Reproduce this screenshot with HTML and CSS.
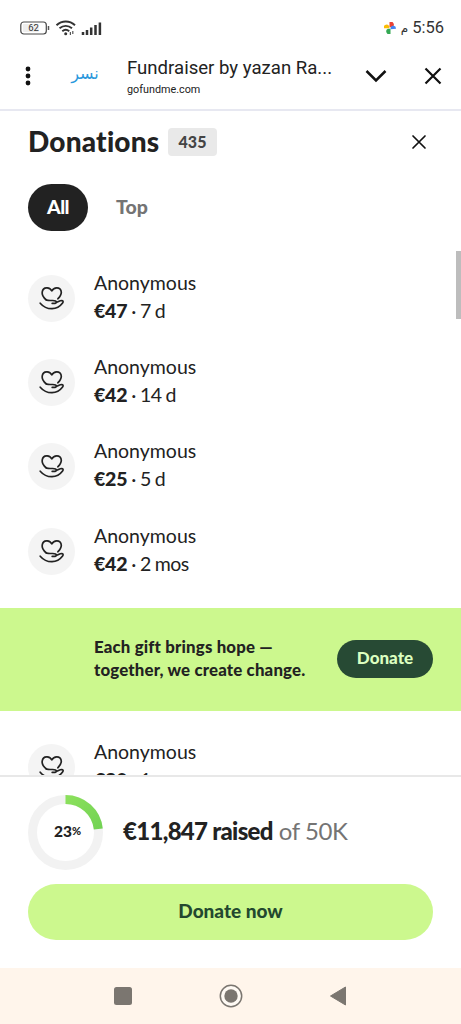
FILE: index.html
```html
<!DOCTYPE html>
<html lang="en">
<head>
<meta charset="utf-8">
<meta name="viewport" content="width=device-width">
<title>Donations</title>
<link rel="stylesheet" href="styles.css">
</head>
<body>
<svg class="defs" width="0" height="0" aria-hidden="true">
  <symbol id="gift" viewBox="0 0 47 47">
    <g fill="none" stroke="#222" stroke-width="1.7" stroke-linecap="round" stroke-linejoin="round">
      <path d="M18.4 25C15.500 22.700 13.800 20 14.200 17.100C14.600 14.300 16.700 12.600 19.200 12.800C21.200 13 22.800 14 23.800 15.900C24.900 14 26.600 12.900 28.700 12.800C31.200 12.700 33.200 14.500 33.300 17.200C33.400 20 31.800 21.700 29.900 23.800"/>
      <path d="M18.400 25C20.700 25.800 22.300 25.400 24.600 25.500C27 25.600 28.500 26.100 28.400 27.200C28.300 28.500 26.300 28.600 24.200 28.300M28.400 27.500C30.300 26.900 31.800 25.600 33.600 25.500C35.200 25.500 35.500 26.900 34.600 28C32.500 30.800 28.800 33.600 24 33.700C18.800 33.800 15 31.400 12.200 28.200"/>
    </g>
  </symbol>
</svg>
<div class="screen">
  <div class="status">
    <svg width="84" height="18" viewBox="0 0 84 18">
      <rect x=".8" y="3" width="25.5" height="12" rx="3" fill="#fff" stroke="#484848" stroke-width="1.2"/>
      <rect x="2.8" y="5" width="16" height="8" rx="1" fill="#eee"/>
      <path d="M28.5 7v4" stroke="#555" stroke-width="1.5"/>
      <text x="13.500" y="12.2" text-anchor="middle" class="battery">62</text>
      <g fill="none" stroke="#333" stroke-width="2">
        <path d="M36.5 6.2C41.9 1.4 49.6 1.4 55 6.2"/>
        <path d="M39.5 9.3C43.3 6.2 48.2 6.2 52 9.3"/>
        <path d="M42.3 12.2C44.3 10.5 47.2 10.5 49.2 12.2"/>
      </g>
      <circle cx="45.7" cy="14.7" r="1.5" fill="#333"/>
      <path d="M50.4 16v-3M52.8 12v3" stroke="#555" stroke-width="1.2"/>
      <path d="M63 16v-3M67 16v-5M71.2 16v-7.5M75.5 16v-10M79.9 16v-12.5" stroke="#333" stroke-width="2.500"/>
    </svg>
    <div class="clock">
      <svg width="12" height="12" viewBox="0 0 12 12">
        <path d="M5.500 0A2.900 2.900 0 0 1 8.200 5.200H5.500z" fill="#ea4335"/>
        <path d="M6.600 5.800A2.700 2.700 0 0 1 11.900 6.800L6.600 7.300z" fill="#4285f4"/>
        <path d="M6.500 6.800V12A2.800 2.800 0 0 1 3.900 6.800z" fill="#34a853"/>
        <path d="M5.300 6.300H0A2.700 2.700 0 0 1 5.300 4.500z" fill="#fbbc04"/>
      </svg>
      <span class="meridiem">م</span><span>5:56</span>
    </div>
  </div>
  <div class="browser">
    <svg class="dots" width="6" height="20" viewBox="0 0 6 20"><g fill="#111"><circle cx="3" cy="3" r="2.4"/><circle cx="3" cy="10" r="2.4"/><circle cx="3" cy="17" r="2.4"/></g></svg>
    <span class="site-logo">نسر</span>
    <div class="page-name"><div class="page-title">Fundraiser by yazan Ra...</div><div class="page-host">gofundme.com</div></div>
    <svg class="chevron" width="22" height="14" viewBox="0 0 22 14"><path d="M1.5 2L11 11.400L20.500 2" fill="none" stroke="#111" stroke-width="2.500"/></svg>
    <svg class="close" width="18" height="18" viewBox="0 0 18 18"><path d="M1.500 1.500l15 15M16.500 1.500l-15 15" stroke="#111" stroke-width="2.200"/></svg>
  </div>
  <main class="dialog">
    <header class="heading">
      <h1>Donations</h1><span class="count">435</span>
      <svg width="16" height="16" viewBox="0 0 16 16"><path d="M2 2l12 12M14 2L2 14" stroke="#111" stroke-width="1.700" stroke-linecap="round"/></svg>
    </header>
    <nav class="tabs"><span class="tab active">All</span><span class="tab">Top</span></nav>
    <section class="list">
      <div class="donor"><span class="avatar"><svg><use href="#gift"/></svg></span><div class="info"><div class="name">Anonymous</div><div class="amount"><b>€47</b> · 7 d</div></div></div>
      <div class="donor"><span class="avatar"><svg><use href="#gift"/></svg></span><div class="info"><div class="name">Anonymous</div><div class="amount"><b>€42</b> · 14 d</div></div></div>
      <div class="donor"><span class="avatar"><svg><use href="#gift"/></svg></span><div class="info"><div class="name">Anonymous</div><div class="amount"><b>€25</b> · 5 d</div></div></div>
      <div class="donor"><span class="avatar"><svg><use href="#gift"/></svg></span><div class="info"><div class="name">Anonymous</div><div class="amount"><b>€42</b> · 2 mos</div></div></div>
      <div class="banner"><p>Each gift brings hope —<br>together, we create change.</p><span class="donate">Donate</span></div>
      <div class="donor"><span class="avatar"><svg><use href="#gift"/></svg></span><div class="info"><div class="name">Anonymous</div><div class="amount"><b>€20</b> · 1 mo</div></div></div>
      <div class="scrollbar"></div>
    </section>
    <footer class="summary">
      <div class="progress">
        <div class="ring">
          <svg width="75" height="75" viewBox="0 0 75 75">
            <defs><linearGradient id="arc" x1="0" y1="0" x2="1" y2="1"><stop offset="0" stop-color="#8be05c"/><stop offset="1" stop-color="#73d354"/></linearGradient></defs>
            <circle cx="37.500" cy="37.500" r="33" fill="none" stroke="#f2f2f2" stroke-width="9"/>
            <path d="M37.500 4.500A33 33 0 0 1 70.300 34" fill="none" stroke="url(#arc)" stroke-width="9"/>
          </svg>
          <span class="percent">23<small>%</small></span>
        </div>
        <div class="raised"><b>€11,847 raised</b><span>of 50K</span></div>
      </div>
      <div class="donate-now">Donate now</div>
    </footer>
  </main>
  <div class="system-nav">
    <svg width="18" height="18"><rect width="18" height="18" rx="2.500" fill="#7b7670"/></svg>
    <svg width="24" height="24"><circle cx="12" cy="12" r="10.700" fill="#fffaf4" stroke="#7b7670" stroke-width="1.500"/><circle cx="12" cy="12" r="6.700" fill="#7b7670"/></svg>
    <svg width="18" height="20"><path d="M16.500 1L1.500 10L16.500 19z" fill="#7b7670" stroke="#7b7670" stroke-width="1" stroke-linejoin="round"/></svg>
  </div>
</div>
</body>
</html>
```
FILE: styles.css
```css
* { box-sizing: border-box; }
body { margin: 0; background: #fff; color: #222; font-family: Lato, sans-serif; font-variant-ligatures: no-common-ligatures; }
svg { display: block; flex: none; }
.defs { position: absolute; }
.screen { width: 461px; height: 1024px; display: flex; flex-direction: column; overflow: hidden; white-space: nowrap; }
.status { height: 45px; padding: 10px 17px 0 20px; display: flex; justify-content: space-between; align-items: center; font-family: Roboto, sans-serif; }
.battery { font: 9.5px Roboto, sans-serif; fill: #333; }
.clock { display: flex; align-items: center; font-size: 16.500px; color: #333; }
.meridiem { font: 12px "DejaVu Sans", sans-serif; margin: 0 4px 0 5px; }
.browser { height: 66px; padding: 0 19px 3px 25px; display: flex; align-items: center; border-bottom: 2px solid #e7e8f1; font-family: Roboto, sans-serif; }
.site-logo { width: 30px; margin-left: 39px; padding-bottom: 5px; font: 16px "DejaVu Sans", sans-serif; color: #2b98dc; text-align: center; }
.page-name { margin-left: 27px; width: 206px; padding-top: 2px; }
.page-title { font-size: 18.600px; line-height: 22px; }
.page-host { font-size: 10.800px; line-height: 14px; margin-top: 4px; }
.chevron { margin-left: 32px; }
.close { margin-left: auto; }
.dialog { height: 857px; display: flex; flex-direction: column; }
.heading { height: 62px; padding: 0 34px 0 28px; display: flex; align-items: center; flex: none; }
h1 { margin: 0; width: 132px; font-size: 28px; font-weight: 900; line-height: 34px; padding-bottom: 3px; letter-spacing: 0.200px; }
.count { width: 49px; height: 28px; margin-left: 8px; border-radius: 4px; background: #e9e9e9; color: #444; font-weight: 900; font-size: 16px; line-height: 27px; text-align: center; }
.heading svg { margin-left: auto; }
.tabs { display: flex; height: 47px; margin: 11px 28px 0; gap: 28px; flex: none; }
.tab { font-size: 19.500px; font-weight: 900; line-height: 45px; color: #747474; }
.tab.active { width: 60px; border-radius: 24px; text-align: center; color: #fff; background: #222; letter-spacing: -0.500px; }
.list { flex: 1; min-height: 0; overflow: hidden; padding-top: 25px; position: relative; }
.donor { height: 84.4px; padding: 0 28px; display: flex; align-items: center; gap: 19px; }
.info { padding-bottom: 3px; }
.avatar { width: 47px; height: 47px; border-radius: 50%; background: #f4f4f4; }
.avatar svg { width: 47px; height: 47px; }
.name, .amount { font-size: 19.500px; line-height: 28px; }
.amount { letter-spacing: -0.500px; word-spacing: -0.500px; }
.amount b { font-weight: 900; letter-spacing: -0.200px; }
.banner { height: 103px; margin: 14px 0 15px; padding: 0 28px 0 94px; background: #ccf88e; display: flex; align-items: center; justify-content: space-between; }
.banner p { margin: 0; padding-bottom: 2px; font-size: 16.800px; line-height: 23.500px; font-weight: 900; letter-spacing: 0.180px; }
.donate { width: 96px; height: 38px; border-radius: 19px; background: #274a34; color: #dcffc0; font-weight: 900; font-size: 17px; line-height: 36px; text-align: center; }
.scrollbar { position: absolute; right: 0; top: 20px; width: 5px; height: 68px; background: #bdbdbd; }
.summary { height: 193px; flex: none; border-top: 2px solid #e8e8e8; padding: 18px 28px 0; }
.progress { display: flex; align-items: center; height: 75px; gap: 20px; }
.ring { display: grid; place-items: center; }
.ring > * { grid-area: 1 / 1; }
.percent { font-size: 15.500px; font-weight: 900; padding: 0 0 3px 4px; }
.percent small { font-size: 11px; vertical-align: 2px; }
.raised { font-size: 24px; line-height: 30px; padding-bottom: 3px; }
.raised b { font-weight: 900; letter-spacing: -0.700px; }
.raised span { color: #747474; font-weight: 400; margin-left: 6px; letter-spacing: -0.400px; }
.donate-now { height: 56px; margin-top: 14px; border-radius: 28px; background: #ccf88e; color: #23482f; font-weight: 900; font-size: 19px; line-height: 54px; text-align: center; }
.system-nav { height: 56px; background: #fff5eb; display: flex; align-items: center; padding: 0 114px; justify-content: space-between; }
```
